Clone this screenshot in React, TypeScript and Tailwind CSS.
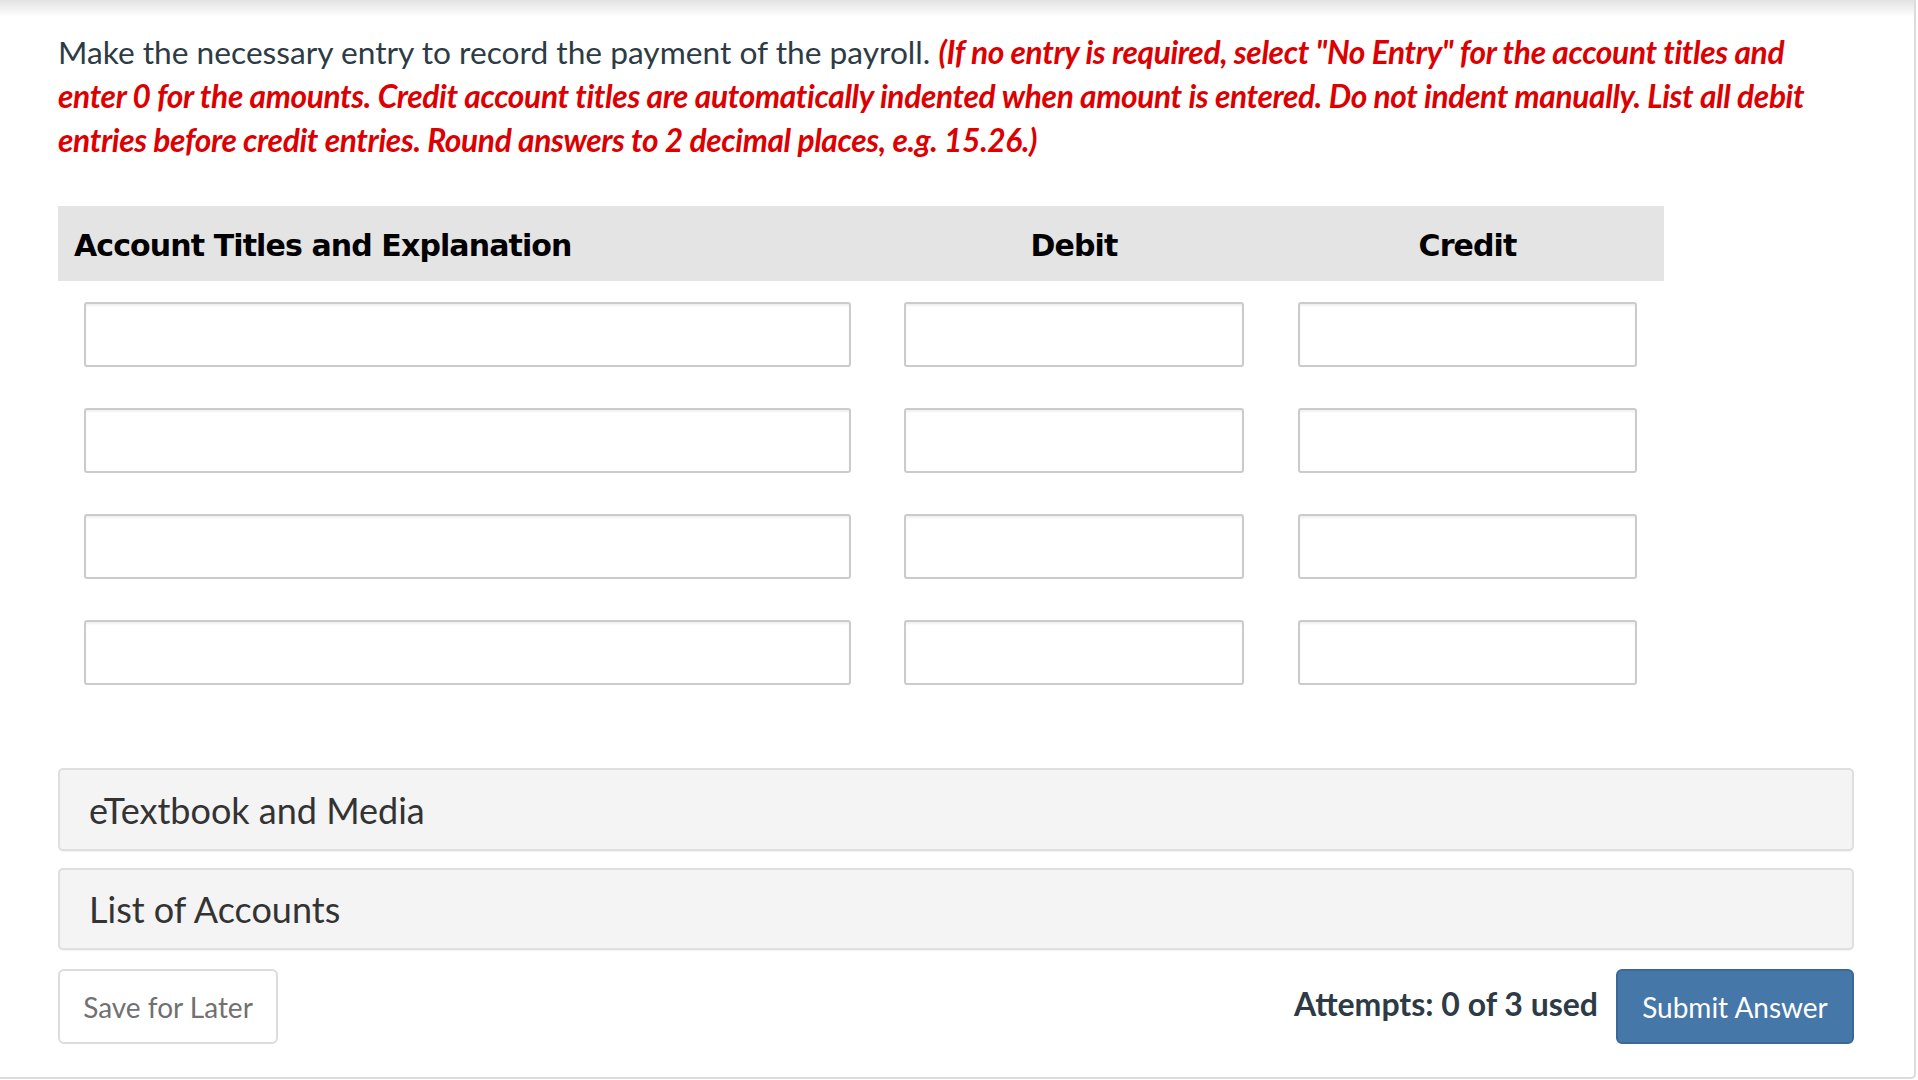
import React from "react";

// ---------------------------------------------------------------------------
// Journal entry question card
// ---------------------------------------------------------------------------

const ROWS = [0, 1, 2, 3];

const INPUT =
  "block h-[65px] w-full rounded-[3px] border-2 border-[#cbcbcb] bg-white shadow-[inset_0_2px_2px_rgba(0,0,0,0.06)] outline-none";

const HEAD =
  "flex h-[75px] items-center bg-[#e4e4e4] pt-[3px] font-['DejaVu_Sans',sans-serif] text-[30px] font-bold tracking-[-0.9px] text-black";

function Accordion({ title, className }: { title: string; className: string }) {
  return (
    <div
      className={`flex items-center rounded-[5px] border-2 border-[#dfdfdf] bg-[#f4f4f4] pl-[29px] shadow-[0_1px_1px_rgba(0,0,0,0.06)] ${className}`}
    >
      <span className="text-[36px] leading-none text-[#333333]">{title}</span>
    </div>
  );
}

export default function App() {
  return (
    <div className="min-h-screen w-full bg-white font-['Lato',sans-serif]">
      <div className="h-[1079px] w-[1916px] rounded-br-[5px] border-r-2 border-b-2 border-[#dcdcdc]">
        {/* top shadow from the bar above */}
        <div className="h-[17px] bg-linear-to-b from-[#e3e3e3] to-white" />

        <div className="w-[1854px] pt-[13px] pl-[58px]">
          <p className="w-[1775px] text-[31.7px] leading-[44px] text-[#2d3b45]">
            Make the necessary entry to record the payment of the payroll.{" "}
            <em className="font-bold tracking-[-0.35px] text-[#dd0000]">
              (If no entry is required, select "No Entry" for the account titles and enter 0 for the
              amounts. Credit account titles are automatically indented when amount is entered. Do
              not indent manually. List all debit entries before credit entries. Round answers to 2
              decimal places, e.g. 15.26.)
            </em>
          </p>

          {/* ---- Entry table ---- */}
          <div className="mt-[44px] grid grid-cols-[819px_394px_393px]">
            <div className={`${HEAD} pl-[16px]`}>Account Titles and Explanation</div>
            <div className={`${HEAD} justify-center`}>Debit</div>
            <div className={`${HEAD} justify-center`}>Credit</div>

            {ROWS.map((r) => (
              <React.Fragment key={r}>
                <div className="pt-[21px] pr-[26px] pb-[20px] pl-[26px]">
                  <input type="text" className={INPUT} />
                </div>
                <div className="px-[27px] pt-[21px] pb-[20px]">
                  <input type="text" className={INPUT} />
                </div>
                <div className="px-[27px] pt-[21px] pb-[20px]">
                  <input type="text" className={INPUT} />
                </div>
              </React.Fragment>
            ))}
          </div>

          {/* ---- Resources ---- */}
          <Accordion title="eTextbook and Media" className="mt-[63px] h-[83px]" />
          <Accordion title="List of Accounts" className="mt-[17px] h-[82px]" />

          {/* ---- Footer ---- */}
          <div className="mt-[19px] flex items-center justify-between">
            <button
              type="button"
              className="h-[75px] w-[220px] rounded-[6px] border-2 border-[#dcdcdc] bg-white text-[28px] text-[#717171]"
            >
              Save for Later
            </button>
            <div className="flex items-center gap-[18px]">
              <span className="pb-[6px] text-[32px] font-bold text-[#2d3b45]">
                Attempts: 0 of 3 used
              </span>
              <button
                type="button"
                className="h-[75px] w-[238px] rounded-[6px] border-2 border-[#3b6896] bg-[#4577a9] text-[28px] text-white"
              >
                Submit Answer
              </button>
            </div>
          </div>
        </div>
      </div>
    </div>
  );
}
